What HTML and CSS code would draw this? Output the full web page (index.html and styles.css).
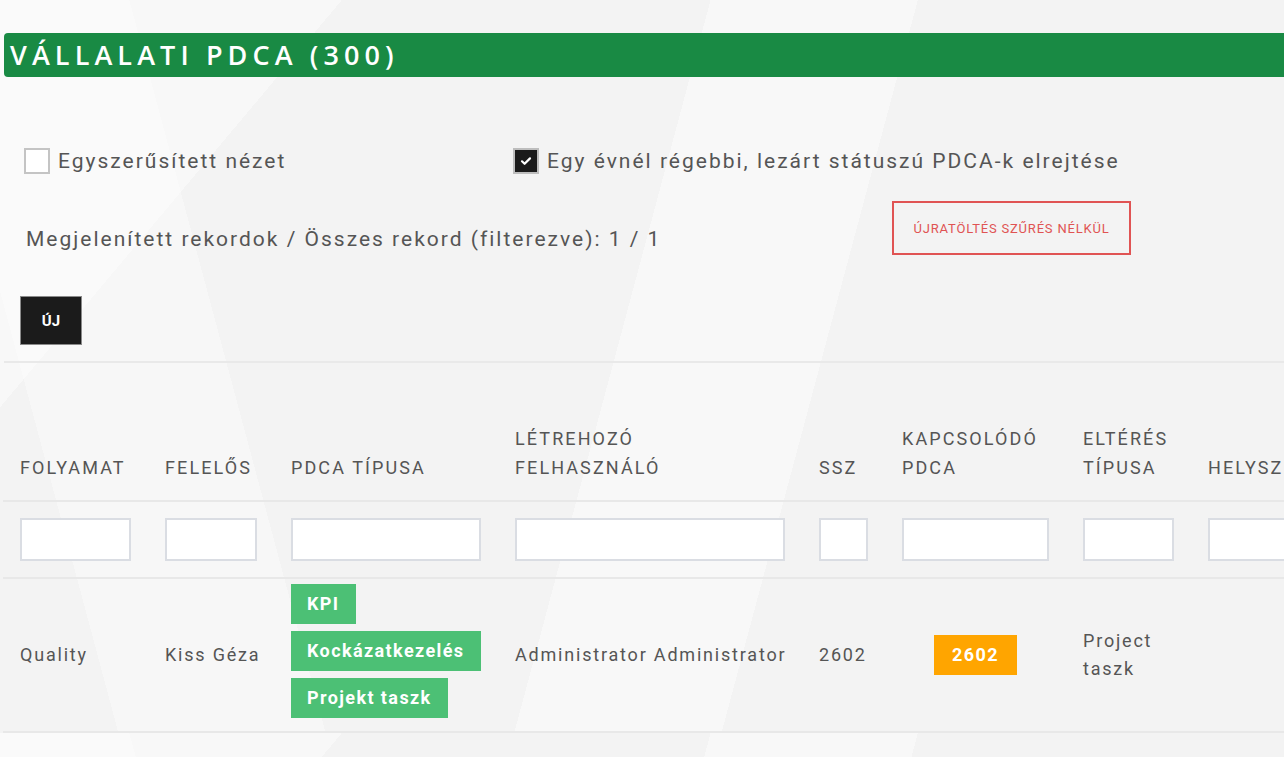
FILE: index.html
```html
<!DOCTYPE html>
<html lang="hu">
<head>
  <meta charset="UTF-8" />
  <meta name="viewport" content="width=device-width, initial-scale=1.0"/>
  <title>Vállalati PDCA</title>
  <link rel="stylesheet" href="styles.css">
</head>
<body>
  <div class="page">
    <h1 class="title-bar">VÁLLALATI PDCA (300)</h1>

    <div class="options">
      <label class="check">
        <span class="box"></span>
        Egyszerűsített nézet
      </label>
      <label class="check">
        <span class="box checked">
          <svg viewBox="0 0 12 12" width="12" height="12"><path d="M2 6.3l2.6 2.5L10 3.4" fill="none" stroke="#fff" stroke-width="2.2" stroke-linecap="round" stroke-linejoin="round"/></svg>
        </span>
        Egy évnél régebbi, lezárt státuszú PDCA-k elrejtése
      </label>
    </div>

    <div class="records">
      <span class="records-text">Megjelenített rekordok / Összes rekord (filterezve): 1 / 1</span>
      <button class="btn-reload" type="button">ÚJRATÖLTÉS SZŰRÉS NÉLKÜL</button>
    </div>

    <div class="actions">
      <button class="btn-new" type="button">ÚJ</button>
    </div>

    <div class="table-wrap">
      <table class="grid">
        <thead>
          <tr class="head">
            <th class="c1">FOLYAMAT</th>
            <th class="c2">FELELŐS</th>
            <th class="c3">PDCA TÍPUSA</th>
            <th class="c4">LÉTREHOZÓ<br>FELHASZNÁLÓ</th>
            <th class="c5">SSZ</th>
            <th class="c6">KAPCSOLÓDÓ<br>PDCA</th>
            <th class="c7">ELTÉRÉS<br>TÍPUSA</th>
            <th class="c8">HELYSZÍN</th>
          </tr>
          <tr class="filters">
            <th><input type="text"></th>
            <th><input type="text"></th>
            <th><input type="text"></th>
            <th><input type="text"></th>
            <th><input type="text"></th>
            <th><input type="text"></th>
            <th><input type="text"></th>
            <th><input type="text"></th>
          </tr>
        </thead>
        <tbody>
          <tr>
            <td>Quality</td>
            <td>Kiss Géza</td>
            <td>
              <span class="tag">KPI</span>
              <span class="tag">Kockázatkezelés</span>
              <span class="tag">Projekt taszk</span>
            </td>
            <td>Administrator Administrator</td>
            <td>2602</td>
            <td class="center"><span class="tag orange">2602</span></td>
            <td>Project<br>taszk</td>
            <td></td>
          </tr>
        </tbody>
      </table>
    </div>
  </div>
</body>
</html>
```

FILE: styles.css
```css
body {
  margin: 0;
  font-family: Roboto, "Liberation Sans", sans-serif;
  color: #555;
  background-color: #f3f3f3;
  background-image:
    linear-gradient(105deg, transparent 0 48%, rgba(255,255,255,0.4) 48% 62%, transparent 62%),
    linear-gradient(75deg, transparent 0 8%, rgba(255,255,255,0.3) 8% 22%, transparent 22%),
    linear-gradient(130deg, rgba(255,255,255,0.45) 0 18%, transparent 18%);
  overflow: hidden;
}

.page {
  padding: 33px 0 0 4px;
}

.title-bar {
  margin: 0;
  height: 44px;
  line-height: 44px;
  padding-left: 6px;
  background: #198a44;
  color: #fff;
  font-family: "Open Sans", sans-serif;
  font-weight: 600;
  font-size: 27px;
  letter-spacing: 5.1px;
  border-radius: 4px 0 0 4px;
}

.options {
  display: grid;
  grid-template-columns: 489px auto;
  margin: 71px 0 0 20px;
  font-size: 21px;
  letter-spacing: 2px;
}

.check {
  display: flex;
  align-items: center;
  gap: 8px;
}

.box {
  width: 22px;
  height: 22px;
  background: #fff;
  border: 2px solid #c4c4c4;
  display: flex;
  align-items: center;
  justify-content: center;
}

.box.checked {
  background: #1b1b1b;
  border-color: #bdbdbd;
}

.records {
  display: grid;
  grid-template-columns: 866px auto;
  margin: 27px 0 0 22px;
  font-size: 21px;
  letter-spacing: 2px;
}

.records-text {
  align-self: end;
  line-height: 28px;
  margin-bottom: 2px;
}

.btn-reload {
  width: 239px;
  height: 54px;
  background: transparent;
  border: 2px solid #e05353;
  color: #e05353;
  font-family: Roboto, sans-serif;
  font-size: 13px;
  letter-spacing: 0.8px;
  cursor: pointer;
}

.actions {
  padding: 41px 0 16px 16px;
  border-bottom: 2px solid #e9e9e9;
}

.btn-new {
  width: 62px;
  height: 49px;
  background: #1b1b1b;
  border: 1px solid #8a8a8a;
  color: #fff;
  font-family: Roboto, sans-serif;
  font-weight: 700;
  font-size: 15px;
}

.table-wrap {
  margin-top: 61px;
  margin-left: -1px;
  overflow: hidden;
}

.grid {
  border-collapse: collapse;
  table-layout: fixed;
  width: 1382px;
  white-space: nowrap;
}

.grid th,
.grid td {
  padding: 0 17px;
  text-align: left;
}

.head th {
  vertical-align: bottom;
  font-weight: 400;
  font-size: 18px;
  line-height: 29px;
  letter-spacing: 2.1px;
  padding-bottom: 18px;
  border-bottom: 2px solid #e8e8e8;
  color: #555;
}

.c1 { width: 111px; }
.c2 { width: 92px; }
.c3 { width: 190px; }
.c4 { width: 270px; }
.c5 { width: 49px; }
.c6 { width: 147px; }
.c7 { width: 91px; }
.c8 { width: 160px; }

.filters th {
  padding-top: 16px;
  padding-bottom: 16px;
  border-bottom: 2px solid #e8e8e8;
}

.filters input {
  display: block;
  width: 100%;
  box-sizing: border-box;
  height: 43px;
  border: 2px solid #dadde3;
  background: #fff;
}

.grid tbody td {
  padding-top: 5px;
  padding-bottom: 6px;
  font-size: 18px;
  line-height: 28px;
  letter-spacing: 1.8px;
  vertical-align: middle;
  border-bottom: 2px solid #e8e8e8;
}

.grid td.center {
  text-align: center;
}

.tag {
  display: block;
  width: fit-content;
  height: 40px;
  line-height: 40px;
  padding: 0 16px;
  margin-bottom: 7px;
  background: #4cc075;
  color: #fff;
  font-weight: 700;
  letter-spacing: 1.4px;
}

.tag.orange {
  display: inline-block;
  padding: 0 18px;
  margin: 0;
  background: #ffa500;
}
```
